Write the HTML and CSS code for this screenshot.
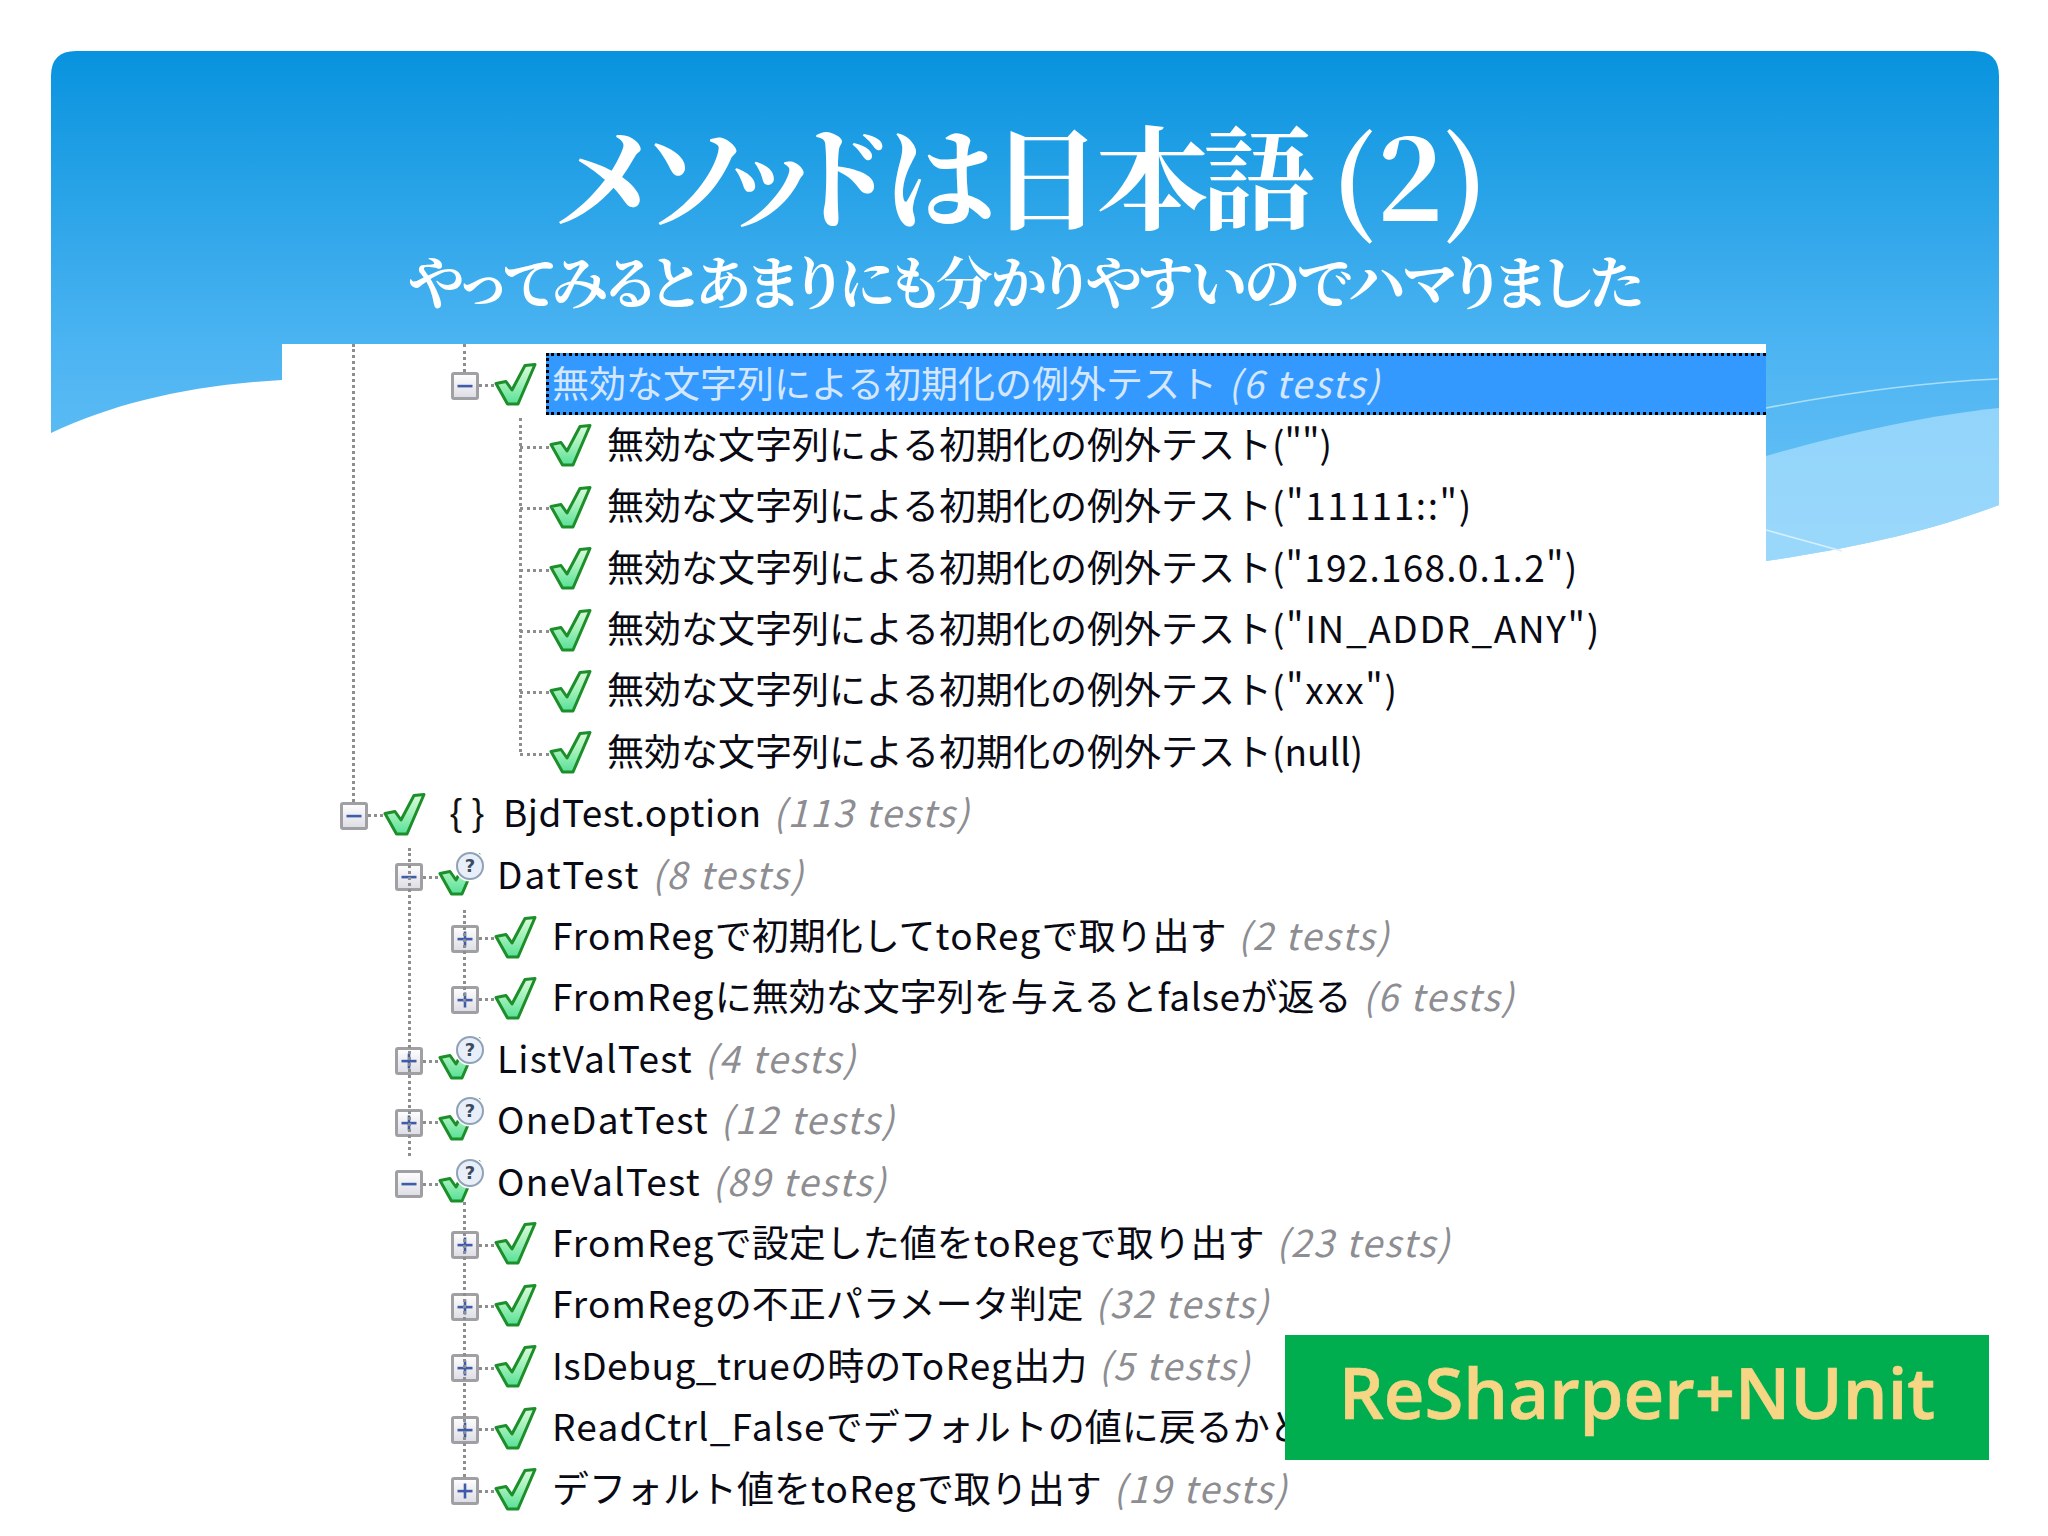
FILE: index.html
```html
<!DOCTYPE html>
<html lang="ja">
<head>
<meta charset="utf-8">
<title>メソッドは日本語(2)</title>
<link rel="stylesheet" href="styles.css">
</head>
<body>
<svg width="0" height="0" class="defs">
  <defs>
    <linearGradient id="gCheck" x1="0" y1="0" x2="0" y2="1">
      <stop offset="0" stop-color="#dcfadc"/>
      <stop offset="0.5" stop-color="#a0f0b8"/>
      <stop offset="1" stop-color="#58e098"/>
    </linearGradient>
    <symbol id="check" viewBox="0 0 43 43">
      <path d="M2 20.5 L12 18.5 L18 27 L31 2.5 L41 1.5 L24 41 L13.5 41 Z" fill="url(#gCheck)" stroke="#1c8e2a" stroke-width="3" stroke-linejoin="round"/>
    </symbol>
    <symbol id="minus" viewBox="0 0 28 28">
      <rect x="1.5" y="1.5" width="25" height="25" rx="1.5" fill="url(#gBox)" stroke="#a0a0a4" stroke-width="3"/>
      <rect x="6.5" y="12.8" width="15" height="2.6" fill="#3f5caa"/>
    </symbol>
    <symbol id="plus" viewBox="0 0 28 28">
      <rect x="1.5" y="1.5" width="25" height="25" rx="1.5" fill="url(#gBox)" stroke="#a0a0a4" stroke-width="3"/>
      <rect x="6.5" y="12.8" width="15" height="2.6" fill="#3f5caa"/>
      <rect x="12.7" y="6.5" width="2.6" height="15" fill="#3f5caa"/>
    </symbol>
    <linearGradient id="gBox" x1="0" y1="0" x2="0" y2="1">
      <stop offset="0" stop-color="#ffffff"/>
      <stop offset="1" stop-color="#dcdce4"/>
    </linearGradient>
    <linearGradient id="gBanner" gradientUnits="userSpaceOnUse" x1="0" y1="51" x2="0" y2="561">
      <stop offset="0" stop-color="#0893de"/>
      <stop offset="0.58" stop-color="#4cb4f2"/>
      <stop offset="1" stop-color="#6ec4f6"/>
    </linearGradient>
  </defs>
</svg>

<main class="slide">
  <svg class="banner" viewBox="0 0 2048 600" width="2048" height="600" aria-hidden="true">
    <path d="M76 51 H1974 Q1999 51 1999 76 V505 C1920 535 1840 550 1766 561 L282 380 C190 385 115 403 51 433 V76 Q51 51 76 51 Z" fill="url(#gBanner)"/>
    <path d="M1766 456 C1850 432 1930 415 1999 408 V505 C1920 535 1840 550 1766 561 Z" fill="#b0e2fd" opacity="0.68"/>
    <path d="M1766 408 C1850 392 1930 382 1998 379" fill="none" stroke="#a9def9" stroke-width="1.6"/>
    <path d="M1766 530 L1842 551" fill="none" stroke="#d4effd" stroke-width="1.6"/>
  </svg>

  <header class="heading">
    <h1 class="title">メソッドは日本語<span class="paren">(2)</span></h1>
    <p class="subtitle">やってみるとあまりにも分かりやすいのでハマりました</p>
  </header>

  <section class="panel">
    <div class="tree">
      <i class="guide g1"></i><i class="guide g2"></i><i class="guide g3"></i>
      <i class="guide g4"></i><i class="guide g5"></i><i class="guide g6"></i>

      <div class="row d3"><svg class="exp"><use href="#minus"/></svg><i class="dots"></i><svg class="check"><use href="#check"/></svg>
        <span class="label selected">無効な文字列による初期化の例外テスト <em>(6 tests)</em></span></div>

      <div class="row d4"><i class="elbow"></i><svg class="check"><use href="#check"/></svg><span class="label">無効な文字列による初期化の例外テスト("")</span></div>
      <div class="row d4"><i class="elbow"></i><svg class="check"><use href="#check"/></svg><span class="label">無効な文字列による初期化の例外テスト<b class="la mid">("11111::")</b></span></div>
      <div class="row d4"><i class="elbow"></i><svg class="check"><use href="#check"/></svg><span class="label">無効な文字列による初期化の例外テスト<b class="la">("192.168.0.1.2")</b></span></div>
      <div class="row d4"><i class="elbow"></i><svg class="check"><use href="#check"/></svg><span class="label">無効な文字列による初期化の例外テスト<b class="la mid">("IN_ADDR_ANY")</b></span></div>
      <div class="row d4"><i class="elbow"></i><svg class="check"><use href="#check"/></svg><span class="label">無効な文字列による初期化の例外テスト<b class="la mid">("xxx")</b></span></div>
      <div class="row d4"><i class="elbow"></i><svg class="check"><use href="#check"/></svg><span class="label">無効な文字列による初期化の例外テスト(null)</span></div>

      <div class="row d1"><svg class="exp"><use href="#minus"/></svg><i class="dots"></i><svg class="check"><use href="#check"/></svg><span class="ns">{ }</span>
        <span class="label"><b class="la narrow">BjdTest.option</b> <em>(113 tests)</em></span></div>

      <div class="row d2"><svg class="exp"><use href="#minus"/></svg><i class="dots"></i><span class="fixture"><svg class="check"><use href="#check"/></svg><span class="q">?</span></span>
        <span class="label"><b class="la wide">DatTest</b> <em>(8 tests)</em></span></div>
      <div class="row d3"><svg class="exp"><use href="#plus"/></svg><i class="dots"></i><svg class="check"><use href="#check"/></svg>
        <span class="label"><b class="la">FromReg</b>で初期化して<b class="la">toReg</b>で取り出す <em>(2 tests)</em></span></div>
      <div class="row d3"><svg class="exp"><use href="#plus"/></svg><i class="dots"></i><svg class="check"><use href="#check"/></svg>
        <span class="label"><b class="la">FromReg</b>に無効な文字列を与えると<b class="la narrow">false</b>が返る <em>(6 tests)</em></span></div>
      <div class="row d2"><svg class="exp"><use href="#plus"/></svg><i class="dots"></i><span class="fixture"><svg class="check"><use href="#check"/></svg><span class="q">?</span></span>
        <span class="label"><b class="la">ListValTest</b> <em>(4 tests)</em></span></div>
      <div class="row d2"><svg class="exp"><use href="#plus"/></svg><i class="dots"></i><span class="fixture"><svg class="check"><use href="#check"/></svg><span class="q">?</span></span>
        <span class="label"><b class="la">OneDatTest</b> <em>(12 tests)</em></span></div>
      <div class="row d2"><svg class="exp"><use href="#minus"/></svg><i class="dots"></i><span class="fixture"><svg class="check"><use href="#check"/></svg><span class="q">?</span></span>
        <span class="label"><b class="la">OneValTest</b> <em>(89 tests)</em></span></div>
      <div class="row d3"><svg class="exp"><use href="#plus"/></svg><i class="dots"></i><svg class="check"><use href="#check"/></svg>
        <span class="label"><b class="la">FromReg</b>で設定した値を<b class="la">toReg</b>で取り出す <em>(23 tests)</em></span></div>
      <div class="row d3"><svg class="exp"><use href="#plus"/></svg><i class="dots"></i><svg class="check"><use href="#check"/></svg>
        <span class="label"><b class="la">FromReg</b>の不正パラメータ判定 <em>(32 tests)</em></span></div>
      <div class="row d3"><svg class="exp"><use href="#plus"/></svg><i class="dots"></i><svg class="check"><use href="#check"/></svg>
        <span class="label"><b class="la narrow">IsDebug_true</b>の時の<b class="la">ToReg</b>出力 <em>(5 tests)</em></span></div>
      <div class="row d3"><svg class="exp"><use href="#plus"/></svg><i class="dots"></i><svg class="check"><use href="#check"/></svg>
        <span class="label"><b class="la">ReadCtrl_False</b>でデフォルトの値に戻るかど</span></div>
      <div class="row d3"><svg class="exp"><use href="#plus"/></svg><i class="dots"></i><svg class="check"><use href="#check"/></svg>
        <span class="label">デフォルト値を<b class="la">toReg</b>で取り出す <em>(19 tests)</em></span></div>
    </div>
  </section>

  <div class="badge">ReSharper+NUnit</div>
</main>
</body>
</html>
```

FILE: styles.css
```css
* { box-sizing: border-box; }
html, body { margin: 0; padding: 0; background: #fff; }
.defs { position: absolute; }
.slide { position: relative; width: 2048px; height: 1536px; overflow: hidden; font-family: "Noto Sans CJK JP", sans-serif; }
.banner { position: absolute; left: 0; top: 0; }

.heading { position: relative; height: 344px; padding-top: 113px; display: flex; flex-direction: column; align-items: center; color: #fff; }
.title { margin: 0; font-family: "Noto Serif CJK JP", serif; font-size: 112px; line-height: 120px; font-weight: 700; white-space: nowrap; font-feature-settings: "palt"; letter-spacing: -5.5px; }
.paren { margin-left: 22px; letter-spacing: 0; }
.subtitle { margin: 16px 0 0; font-family: "Noto Serif CJK JP", serif; font-size: 57px; line-height: 60px; font-weight: 700; white-space: nowrap; font-feature-settings: "palt"; letter-spacing: -3.4px; }

.panel { position: relative; width: 1484px; height: 1192px; margin-left: 282px; background: #fff; overflow: hidden; }
.tree { position: relative; padding-top: 11.3px; }

.row { height: 61.4px; display: flex; align-items: center; white-space: nowrap; }
.d1 { padding-left: 58px; }
.d2 { padding-left: 113px; }
.d3 { padding-left: 169px; }
.d4 { padding-left: 238px; }

.exp { width: 28px; height: 28px; flex: none; }
.dots { width: 15px; height: 0; flex: none; border-top: 3px dotted #8e8e8e; }
.elbow { width: 29px; height: 0; flex: none; border-top: 3px dotted #8e8e8e; }
.check { width: 43px; height: 43px; flex: none; margin-top: -3px; }

.label { font-size: 37px; line-height: 50px; color: #0a0a14; margin-left: 15px; padding-bottom: 9px; }
.d2 .label { margin-left: 16px; }
.la { font-weight: 400; letter-spacing: 1.2px; }
.la.narrow { letter-spacing: 0.5px; }
.la.mid { letter-spacing: 1.6px; }
.la.wide { letter-spacing: 2px; }
.label em { font-style: italic; color: #8d8d92; margin-left: 3px; letter-spacing: 2px; }

.selected { flex: 1; height: 62px; margin-left: 9px; margin-bottom: 4px; padding: 0 0 6px 3px; line-height: 52px; background: #3399ff; color: #d4e7ff; border: 3px dotted #000; border-right: 0; }
.label.selected em { color: #d4e7ff; }

.ns { width: 62px; flex: none; padding-left: 24px; font: 400 36px "Liberation Sans", sans-serif; color: #111; white-space: pre; padding-bottom: 6px; }

.fixture { position: relative; width: 43px; height: 43px; flex: none; display: block; }
.fixture .check { display: block; }
.q { position: absolute; left: 18px; top: -4px; width: 28px; height: 28px; border-radius: 50%; border: 2.6px solid #8fa2b8; background: #e9eff8; box-shadow: 0 0 0 1.5px #fff; color: #3a4a60; font: 700 18px/23px "DejaVu Sans", sans-serif; text-align: center; }

.guide { position: absolute; width: 0; border-left: 3px dotted #8e8e8e; }
.g1 { left: 70px; top: 0; height: 458px; }
.g2 { left: 181px; top: 0; height: 28px; }
.g3 { left: 237px; top: 74px; height: 334px; }
.g4 { left: 126px; top: 504px; height: 308px; }
.g5 { left: 181px; top: 566px; height: 92px; }
.g6 { left: 181px; top: 858px; height: 275px; }

.badge { position: absolute; left: 1285px; top: 1335px; width: 704px; height: 125px; background: #00ae50; color: #f6d685; display: flex; align-items: center; justify-content: center; font: 600 70.6px "Open Sans", sans-serif; -webkit-text-stroke: 0.7px #f6d685; padding-bottom: 12px; }
```
